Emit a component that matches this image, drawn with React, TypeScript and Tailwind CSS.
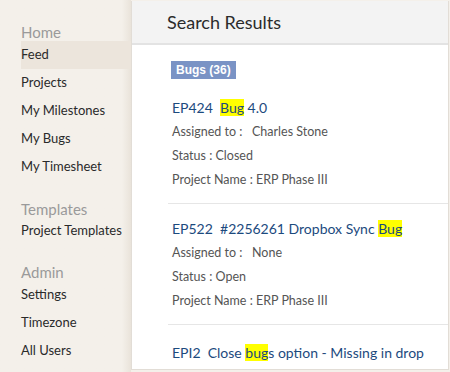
import React from "react";

const font = { fontFamily: "Lato, 'Open Sans', Arial, sans-serif" };

function NavItem({ label, active, h = "h-[28px]" }: { label: string; active?: boolean; h?: string }) {
  return (
    <div className={`${h} flex items-center text-[13px] text-[#2a2a2a] ${active ? "bg-[#ece5dc]" : ""}`}>
      {label}
    </div>
  );
}

function SectionTitle({ label }: { label: string }) {
  return <div className="h-[17px] flex items-center text-[15px] text-[#9a9a9a]">{label}</div>;
}

function HL({ children }: { children: React.ReactNode }) {
  return <span className="bg-[#ffff00]">{children}</span>;
}

function Result({
  title,
  assigned,
  status,
  pt,
}: {
  title: React.ReactNode;
  assigned: string;
  status: string;
  pt: string;
}) {
  return (
    <div className="ml-[36px] border-b border-[#e6e6e6]">
      <div className={`pl-[4px] ${pt} pb-[10px]`}>
        <div className="h-[22px] flex items-center text-[14px] text-[#1c4a7e] whitespace-pre">{title}</div>
        <div className="mt-[2px] flex flex-col text-[12.5px] text-[#555]">
          <div className="h-[24px] flex items-center whitespace-pre">{`Assigned to :   ${assigned}`}</div>
          <div className="h-[24px] flex items-center">Status : {status}</div>
          <div className="h-[25px] flex items-center">Project Name : ERP Phase III</div>
        </div>
      </div>
    </div>
  );
}

export default function App() {
  return (
    <div className="w-[450px] h-[372px] flex bg-[#f4f0ea] overflow-hidden" style={font}>
      <div className="w-[131px] shrink-0 flex flex-col pl-[21px] pt-[24px] bg-gradient-to-r from-[#f4f0ea] from-[93%] to-[#e9e3da]">
        <SectionTitle label="Home" />
        <NavItem label="Feed" active />
        <NavItem label="Projects" />
        <NavItem label="My Milestones" />
        <NavItem label="My Bugs" />
        <NavItem label="My Timesheet" />
        <div className="mt-[20px]">
          <SectionTitle label="Templates" />
        </div>
        <NavItem label="Project Templates" h="h-[26px]" />
        <div className="mt-[20px]">
          <SectionTitle label="Admin" />
        </div>
        <NavItem label="Settings" />
        <NavItem label="Timezone" />
        <NavItem label="All Users" />
      </div>
      <div className="flex-1 mt-[1px] mb-[2px] mr-[1px] bg-white border-l border-r border-b border-[#e2ddd6] flex flex-col">
        <div className="h-[44px] shrink-0 bg-[#f3f3f3] border-b-2 border-[#e3e3e3] flex items-center pl-[35px] text-[18px] text-[#2b2b2b]">
          Search Results
        </div>
        <div className="ml-[39px] mt-[16px] self-start h-[18px] px-[5px] bg-[#7a93c5] text-white text-[12px] font-bold flex items-center font-['Liberation_Sans',Arial,sans-serif]">
          Bugs (36)
        </div>
        <Result
          pt="pt-[17px]"
          title={
            <span>
              {"EP424  "}
              <HL>Bug</HL>
              {" 4.0"}
            </span>
          }
          assigned="Charles Stone"
          status="Closed"
        />
        <Result
          pt="pt-[13px]"
          title={
            <span>
              {"EP522  #2256261 Dropbox Sync "}
              <HL>Bug</HL>
            </span>
          }
          assigned="None"
          status="Open"
        />
        <div className="ml-[40px] mt-[16px] h-[22px] flex items-center text-[14px] text-[#1c4a7e] whitespace-pre">
          <span>
            {"EPI2  Close "}
            <HL>bug</HL>
            {"s option - Missing in drop"}
          </span>
        </div>
      </div>
    </div>
  );
}
